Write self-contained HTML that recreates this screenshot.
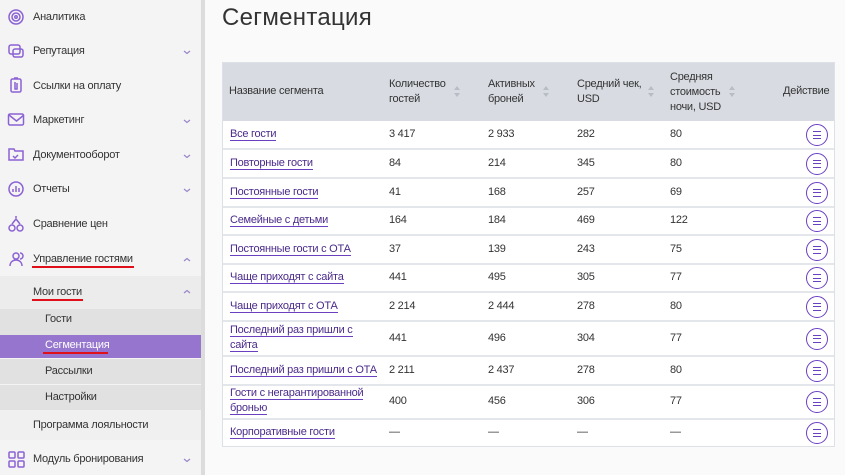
<!DOCTYPE html>
<html><head><meta charset="utf-8"><style>
*{margin:0;padding:0;box-sizing:border-box}
body{width:845px;height:475px;overflow:hidden;background:#fafafa;font-family:"Liberation Sans","DejaVu Sans",sans-serif;color:#333;position:relative;font-size:11px;letter-spacing:-0.25px}
.sb{position:absolute;left:0;top:0;width:201px;height:475px;background:#f4f4f4}
.sbb{position:absolute;left:201px;top:0;width:4px;height:475px;background:#dcdcdc}
.it{position:absolute;left:0;width:201px;font-size:11px;color:#333}
.it .t{position:absolute;left:33px}
.title{position:absolute;left:222px;top:4px;font-size:24px;color:#333;letter-spacing:.3px}
.tbl{position:absolute;left:222px;top:62px;width:613px;height:385px;background:#fff;border:1px solid #dde0e4}
.hd{position:absolute;left:0;top:0;width:611px;height:58px;background:#d8dce2}
.c{position:absolute;font-size:11px;line-height:15px;color:#333}
.ln{position:absolute;left:0;width:611px;height:2px;background:#e3e6ea}
a{color:#4a2a8a;text-decoration:none;border-bottom:1px solid #6a3fc0}
.btn{position:absolute;left:583px;width:22px;height:22px;border:1.5px solid #6a3fc0;border-radius:50%}
.btn i{position:absolute;left:6px;width:8px;height:1.3px;background:#6a3fc0}
.red{position:absolute;height:2px;background:#e0101a}
</style></head><body>
<div class="sb"></div><div class="sbb"></div>
<div style="position:absolute;left:0;top:276px;width:201px;height:33px;background:#ececec"></div>
<div style="position:absolute;left:0;top:309px;width:201px;height:101px;background:#e1e1e1"></div>
<div style="position:absolute;left:0;top:335px;width:201px;height:1px;background:#f4f4f4"></div>
<div style="position:absolute;left:0;top:335px;width:201px;height:23px;background:#9575cd"></div>
<div style="position:absolute;left:0;top:384px;width:201px;height:1px;background:#f4f4f4"></div>
<div style="position:absolute;left:0;top:358px;width:201px;height:1px;background:#f4f4f4"></div>
<div style="position:absolute;left:0;top:410px;width:201px;height:30px;background:#f0f0f0"></div>
<div style="position:absolute;left:0;top:440px;width:201px;height:35px;background:#f4f4f4"></div>
<svg style="position:absolute;left:0;top:0" width="201" height="475" fill="none" stroke="#8b62d4" stroke-width="1.5">
<circle cx="16" cy="17" r="7"/><circle cx="16" cy="17" r="4"/><circle cx="16" cy="17" r="1.2"/>
<rect x="9" y="45" width="11" height="9" rx="2"/><rect x="13" y="49" width="10" height="8" rx="2"/>
<rect x="11" y="79" width="10" height="13" rx="1.5"/><path d="M14 78h4M15 82v7h2v-6"/>
<rect x="8.5" y="114" width="15" height="11" rx="1.5"/><path d="M9 115l7.5 6 7.5-6"/>
<path d="M9 149h5l1 2h8v9H9z"/><path d="M13 156l2 2 3-3"/>
<circle cx="16" cy="189" r="7"/><path d="M13 192v-3M16 192v-6M19 192v-4"/>
<circle cx="12" cy="228" r="3"/><circle cx="20" cy="228" r="3"/><path d="M12 224l4-5 4 5M16 218v-2"/>
<circle cx="16" cy="256" r="3"/><path d="M10 266c0-4 3-6 6-6s6 2 6 6M20 253a3 3 0 0 1 0 6"/>
<rect x="9" y="452" width="6" height="6" rx="1"/><rect x="18" y="452" width="6" height="6" rx="1"/><rect x="9" y="461" width="6" height="6" rx="1"/><rect x="18" y="461" width="6" height="6" rx="1"/>
<g stroke="#9a86c8" stroke-width="1.2"><path d="M184 51l3 2.5 3-2.5M184 120l3 2.5 3-2.5M184 155l3 2.5 3-2.5M184 189l3 2.5 3-2.5M184 459l3 2.5 3-2.5M184 261l3-2.5 3 2.5M184 293l3-2.5 3 2.5"/></g>
</svg>
<div class="it" style="top:11px"><span class="t">Аналитика</span></div>
<div class="it" style="top:45px"><span class="t">Репутация</span></div>
<div class="it" style="top:80px"><span class="t">Ссылки на оплату</span></div>
<div class="it" style="top:114px"><span class="t">Маркетинг</span></div>
<div class="it" style="top:149px"><span class="t">Документооборот</span></div>
<div class="it" style="top:183px"><span class="t">Отчеты</span></div>
<div class="it" style="top:218px"><span class="t">Сравнение цен</span></div>
<div class="it" style="top:253px"><span class="t">Управление гостями</span></div>
<div class="red" style="left:32px;top:266px;width:102px"></div>
<div class="it" style="top:286px"><span class="t">Мои гости</span></div>
<div class="red" style="left:32px;top:299px;width:51px"></div>
<div class="it" style="top:313px"><span class="t" style="left:45px">Гости</span></div>
<div class="it" style="top:339px;color:#fff"><span class="t" style="left:45px">Сегментация</span></div>
<div class="red" style="left:43px;top:352px;width:65px"></div>
<div class="it" style="top:365px"><span class="t" style="left:45px">Рассылки</span></div>
<div class="it" style="top:391px"><span class="t" style="left:45px">Настройки</span></div>
<div class="it" style="top:419px"><span class="t">Программа лояльности</span></div>
<div class="it" style="top:453px"><span class="t">Модуль бронирования</span></div>

<div class="title">Сегментация</div>
<div class="tbl">
<div class="hd"></div>
<div class="c" style="left:6px;top:21px">Название сегмента</div>
<div class="c" style="left:166px;top:14px">Количество<br>гостей</div>
<div class="c" style="left:265px;top:14px">Активных<br>броней</div>
<div class="c" style="left:354px;top:14px">Средний чек,<br>USD</div>
<div class="c" style="left:447px;top:7px">Средняя<br>стоимость<br>ночи, USD</div>
<div class="c" style="left:560px;top:21px">Действие</div>
<svg style="position:absolute;left:0;top:0" width="611" height="58" fill="#b8bcc4"><path d="M231 27l3-4 3 4zM231 30l3 4 3-4zM320 27l3-4 3 4zM320 30l3 4 3-4zM425 27l3-4 3 4zM425 30l3 4 3-4zM506 27l3-4 3 4zM506 30l3 4 3-4z"/></svg>
<div id="rows"></div>
</div>
<script>
var d=[["Все гости","3 417","2 933","282","80",58,86],["Повторные гости","84","214","345","80",86,115],["Постоянные гости","41","168","257","69",115,144],["Семейные с детьми","164","184","469","122",144,172],["Постоянные гости с ОТА","37","139","243","75",172,201],["Чаще приходят с сайта","441","495","305","77",201,229],["Чаще приходят с ОТА","2 214","2 444","278","80",229,258],["Последний раз пришли с<br>сайта","441","496","304","77",258,293],["Последний раз пришли с ОТА","2 211","2 437","278","80",293,322],["Гости с негарантированной<br>бронью","400","456","306","77",322,356],["Корпоративные гости","—","—","—","—",356,384]];
var h="";d.forEach(function(r,i){var t=r[5],b=r[6],m=(t+b)/2;
if(i>0)h+='<div class="ln" style="top:'+(t-1)+'px"></div>';
var two=r[0].indexOf("<br>")>0;
h+='<div class="c" style="left:7px;top:'+(m-(two?16:8))+'px"><a>'+r[0].replace("<br>","</a><br><a>")+'</a></div>';
[166,265,354,447].forEach(function(x,j){h+='<div class="c" style="left:'+x+'px;top:'+(m-8)+'px">'+r[j+1]+'</div>'});
h+='<div class="btn" style="top:'+(m-11)+'px"><i style="top:6px"></i><i style="top:9.5px"></i><i style="top:13px"></i></div>';});
document.getElementById("rows").innerHTML=h;
</script>
</body></html>
